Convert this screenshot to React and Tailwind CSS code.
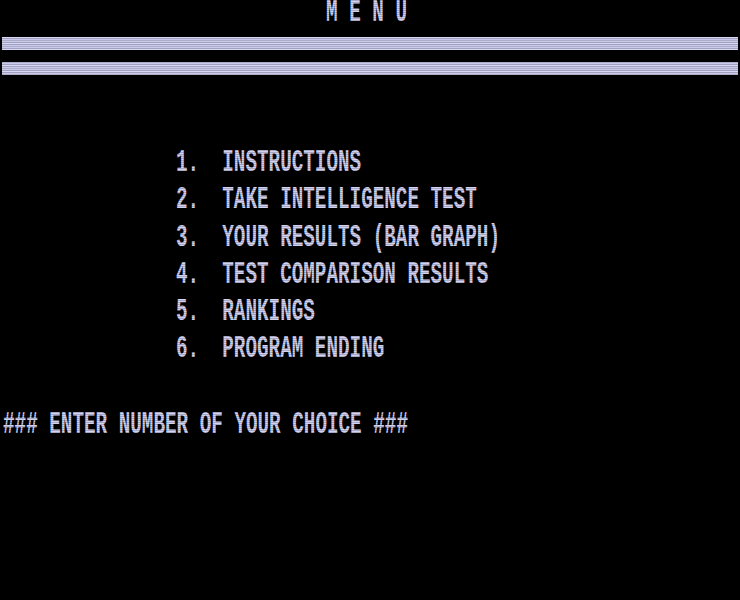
const items = [
  'INSTRUCTIONS',
  'TAKE INTELLIGENCE TEST',
  'YOUR RESULTS (BAR GRAPH)',
  'TEST COMPARISON RESULTS',
  'RANKINGS',
  'PROGRAM ENDING',
];

// tall, narrow CRT-style glyphs
const Crt = ({ children }) => (
  <span className="inline-block origin-center scale-y-[1.6] whitespace-pre">{children}</span>
);

const Bar = () => (
  <div className="mx-[2px] h-[13px] bg-[#cfcff0] bg-[repeating-linear-gradient(to_bottom,#d8d8f8_0px,#d8d8f8_1px,#cacaee_1px,#cacaee_3px)]" />
);

export default function App() {
  return (
    <div className="relative h-[600px] w-[740px] overflow-hidden bg-black text-[#d2d2f2] font-['Liberation_Mono',monospace] text-[19.3px] font-bold">
      <div className="flex h-[24px] items-center pt-[4px] pl-[326px] leading-none">
        <Crt>M E N U</Crt>
      </div>

      <div className="mt-[13px] flex flex-col gap-[12px]">
        <Bar />
        <Bar />
      </div>

      <div className="mt-[70px] flex flex-col pl-[176px]">
        {items.map((label, i) => (
          <div key={label} className="flex h-[37.3px] items-center leading-none">
            <Crt>{`${i + 1}.  ${label}`}</Crt>
          </div>
        ))}
      </div>

      <div className="mt-[42px] flex h-[30px] items-center pl-[3px] leading-none">
        <Crt>### ENTER NUMBER OF YOUR CHOICE ###</Crt>
      </div>

      {/* scanlines */}
      <div className="pointer-events-none absolute inset-0 bg-[repeating-linear-gradient(to_bottom,rgba(0,0,0,0.2)_0px,rgba(0,0,0,0.2)_1px,transparent_1px,transparent_2px)]" />
    </div>
  );
}
